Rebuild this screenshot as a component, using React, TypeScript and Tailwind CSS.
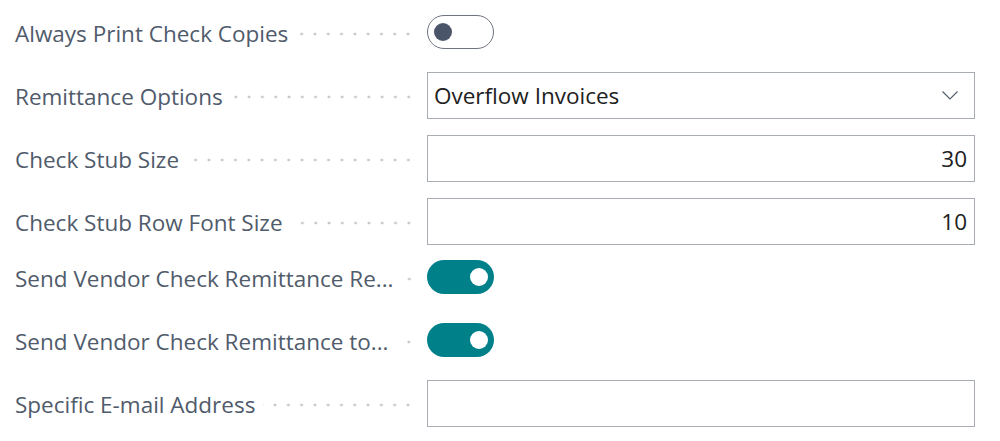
import { useState } from "react";

type Field =
  | { kind: "toggle"; label: string; on: boolean }
  | { kind: "select"; label: string; value: string }
  | { kind: "number"; label: string; value: string }
  | { kind: "text"; label: string; value: string };

const fields: Field[] = [
  { kind: "toggle", label: "Always Print Check Copies", on: false },
  { kind: "select", label: "Remittance Options", value: "Overflow Invoices" },
  { kind: "number", label: "Check Stub Size", value: "30" },
  { kind: "number", label: "Check Stub Row Font Size", value: "10" },
  { kind: "toggle", label: "Send Vendor Check Remittance Re...", on: true },
  { kind: "toggle", label: "Send Vendor Check Remittance to...", on: true },
  { kind: "text", label: "Specific E-mail Address", value: "" },
];

export default function App() {
  return (
    <div
      className="h-[441px] w-[1000px] bg-white pt-2"
      style={{ fontFamily: '"Open Sans", "Noto Sans", sans-serif' }}
    >
      <div className="flex flex-col gap-[15px]">
        {fields.map((field, index) => (
          <Row key={field.label} field={field} shift={index === 4} />
        ))}
      </div>
    </div>
  );
}

function Row({ field, shift }: { field: Field; shift: boolean }) {
  return (
    <div className={`flex h-12 items-center ${shift ? "-mt-[7px]" : ""}`}>
      <div className="flex w-[427px] items-center pl-[15px] pr-[12px]">
        <span className="shrink-0 whitespace-nowrap pt-[3px] text-[22.5px] leading-[30px] text-[#505b6b]">
          {field.label}
        </span>
        <span className="ml-2 mt-[3px] h-2 min-w-[14px] flex-1 bg-[radial-gradient(circle,#c6c8cc_1.2px,transparent_1.7px)] bg-[length:13.3px_8px] bg-[position:right_center] bg-repeat-x" />
      </div>
      <div className="flex w-[548px] items-center">
        <Control field={field} />
      </div>
    </div>
  );
}

function Control({ field }: { field: Field }) {
  const [on, setOn] = useState(field.kind === "toggle" ? field.on : false);

  if (field.kind === "toggle") {
    return on ? (
      <button
        onClick={() => setOn(false)}
        className="flex h-[34px] w-[67px] items-center justify-end rounded-full bg-[#00818a] pr-[6px]"
      >
        <span className="size-[18px] rounded-full bg-white" />
      </button>
    ) : (
      <button
        onClick={() => setOn(true)}
        className="flex h-[34px] w-[67px] items-center rounded-full border-[1.5px] border-[#6e7480] bg-white pl-[6px]"
      >
        <span className="size-[18px] rounded-full bg-[#4b5569]" />
      </button>
    );
  }

  if (field.kind === "select") {
    return (
      <div className="flex h-[47px] w-full items-center justify-between border border-[#a8acb3] pl-[6px] pr-[16px]">
        <span className="pt-[2px] text-[22.5px] leading-[30px] text-[#212121]">{field.value}</span>
        <svg width="16" height="9" viewBox="0 0 16 9" fill="none">
          <path d="M0.5 0.5 L8 8 L15.5 0.5" stroke="#505b6b" strokeWidth="1.1" />
        </svg>
      </div>
    );
  }

  return (
    <div
      className={`flex h-[47px] w-full items-center border border-[#a8acb3] px-[7px] ${
        field.kind === "number" ? "justify-end" : "justify-start"
      }`}
    >
      <span className="pt-[2px] text-[22.5px] leading-[30px] text-[#212121]">{field.value}</span>
    </div>
  );
}
